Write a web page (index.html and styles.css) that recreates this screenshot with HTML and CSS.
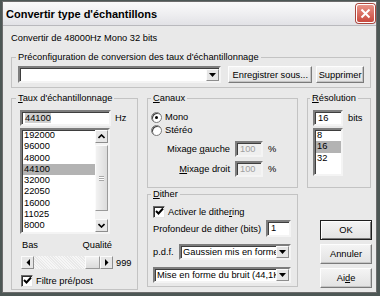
FILE: index.html
```html
<!DOCTYPE html>
<html lang="fr">
<head>
  <meta charset="UTF-8" />
  <title>Convertir type d'échantillons</title>
  <link rel="stylesheet" href="styles.css">
</head>
<body>

  <div class="window">
    <div class="titlebar">
      <span class="title">Convertir type d'échantillons</span>
      <span class="close-btn">
        <svg width="11" height="11" viewBox="0 0 11 11"><path d="M1.5 1.5 L9.5 9.5 M9.5 1.5 L1.5 9.5" stroke="#fff" stroke-width="2" /></svg>
      </span>
    </div>

    <div class="client">
      <p class="info">Convertir de 48000Hz Mono 32 bits</p>

      <fieldset class="group preset">
        <legend>Préconfiguration de conversion des taux d'échantillonnage</legend>
        <div class="preset-row">
          <div class="combo preset-combo">
            <span class="combo-text"></span>
            <span class="drop-btn"><svg width="7" height="4" viewBox="0 0 7 4"><path d="M0 0 H7 L3.5 4 Z" fill="#000" /></svg></span>
          </div>
          <span class="btn btn-save">Enregistrer sous...</span>
          <span class="btn btn-delete">Supprimer</span>
        </div>
      </fieldset>

      <div class="main">
        <fieldset class="group rate">
          <legend><u>T</u>aux d'échantillonnage</legend>
          <div class="field-row">
            <span class="edit rate-edit"><span class="sel-text">44100</span></span>
            <span class="unit">Hz</span>
          </div>
          <div class="listbox rate-list">
            <ul class="list-items">
              <li>192000</li>
              <li>96000</li>
              <li>48000</li>
              <li class="selected">44100</li>
              <li>32000</li>
              <li>22050</li>
              <li>16000</li>
              <li>11025</li>
              <li>8000</li>
            </ul>
            <div class="vscroll">
              <span class="sb-btn"><svg width="7" height="5" viewBox="0 0 7 5"><path d="M0.5 4 L3.5 1 L6.5 4" stroke="#000" stroke-width="1.6" fill="none" /></svg></span>
              <span class="sb-thumb"><span class="grip"></span></span>
              <span class="sb-track"></span>
              <span class="sb-btn"><svg width="7" height="5" viewBox="0 0 7 5"><path d="M0.5 1 L3.5 4 L6.5 1" stroke="#000" stroke-width="1.6" fill="none" /></svg></span>
            </div>
          </div>
          <div class="quality-labels">
            <span>Bas</span>
            <span>Qualité</span>
          </div>
          <div class="slider-row">
            <div class="hscroll">
              <span class="sb-btn"><svg width="4" height="7" viewBox="0 0 4 7"><path d="M4 0 V7 L0.5 3.5 Z" fill="#000" /></svg></span>
              <span class="hs-track"><span class="hs-thumb"></span></span>
              <span class="sb-btn"><svg width="4" height="7" viewBox="0 0 4 7"><path d="M0 0 V7 L3.5 3.5 Z" fill="#000" /></svg></span>
            </div>
            <span class="slider-value">999</span>
          </div>
          <label class="check-row filter-row">
            <span class="checkbox"><svg width="9" height="9" viewBox="0 0 9 9"><path d="M1 4 L3.5 6.5 L8 1.5" stroke="#000" stroke-width="2" fill="none" /></svg></span>
            <span>Filtre pré/post</span>
          </label>
        </fieldset>

        <fieldset class="group channels">
          <legend><u>C</u>anaux</legend>
          <label class="radio-row">
            <span class="radio checked"></span>
            <span>Mono</span>
          </label>
          <label class="radio-row">
            <span class="radio"></span>
            <span>Stéréo</span>
          </label>
          <div class="mix-row mix-left">
            <span class="mix-label">Mixage <u>g</u>auche</span>
            <span class="edit disabled">100</span>
            <span>%</span>
          </div>
          <div class="mix-row">
            <span class="mix-label"><u>M</u>ixage droit</span>
            <span class="edit disabled">100</span>
            <span>%</span>
          </div>
        </fieldset>

        <fieldset class="group resolution">
          <legend><u>R</u>ésolution</legend>
          <div class="field-row">
            <span class="edit res-edit">16</span>
            <span class="unit">bits</span>
          </div>
          <div class="listbox res-list">
            <ul class="list-items">
              <li>8</li>
              <li class="selected">16</li>
              <li>32</li>
            </ul>
          </div>
        </fieldset>

        <fieldset class="group dither">
          <legend><u>D</u>ither</legend>
          <label class="check-row">
            <span class="checkbox"><svg width="9" height="9" viewBox="0 0 9 9"><path d="M1 4 L3.5 6.5 L8 1.5" stroke="#000" stroke-width="2" fill="none" /></svg></span>
            <span>Activer le dithe<u>r</u>ing</span>
          </label>
          <div class="depth-row">
            <span>Profondeur de dither (bits)</span>
            <span class="edit depth-edit">1</span>
          </div>
          <div class="pdf-row">
            <span>p.d.f.</span>
            <div class="combo pdf-combo">
              <span class="combo-text">Gaussien mis en forme</span>
              <span class="drop-btn"><svg width="7" height="4" viewBox="0 0 7 4"><path d="M0 0 H7 L3.5 4 Z" fill="#000" /></svg></span>
            </div>
          </div>
          <div class="combo noise-combo">
            <span class="combo-text">Mise en forme du bruit (44,1KHz)</span>
            <span class="drop-btn"><svg width="7" height="4" viewBox="0 0 7 4"><path d="M0 0 H7 L3.5 4 Z" fill="#000" /></svg></span>
          </div>
        </fieldset>

        <div class="actions">
          <span class="btn btn-default">OK</span>
          <span class="btn">Annuler</span>
          <span class="btn">Ai<u>d</u>e</span>
        </div>
      </div>
    </div>
  </div>

</body>
</html>
```

FILE: styles.css
```css
* {
  box-sizing: border-box;
}

body {
  margin: 0;
  background-color: #4d5755;
  font-family: "Liberation Sans", Arial, sans-serif;
  font-size: 9.3px;
  color: #000;
}

.window {
  width: 375px;
  height: 292px;
  margin: 1px 0 0 2px;
  border: 1px solid #6c6c6c;
  background-color: #e9e9e9;
  display: flex;
  flex-direction: column;
}

.titlebar {
  flex: none;
  height: 24px;
  padding: 0 1px 0 3px;
  display: flex;
  align-items: center;
  justify-content: space-between;
  background: linear-gradient(#fafafa, #efeff1 50%, #e2e2e6);
  border-bottom: 1px solid #b9b9bd;
}

.title {
  font-size: 11px;
  font-weight: bold;
}

.close-btn {
  width: 19px;
  height: 19px;
  border: 1px solid #fff;
  border-radius: 3px;
  background: linear-gradient(#e89488, #c9493e);
  box-shadow: 0 0 0 1px #a9463d;
  display: flex;
  align-items: center;
  justify-content: center;
}

.client {
  padding: 0 5px 0 8px;
}

.info {
  margin: 6px 0 0;
  line-height: 12px;
}

/* group boxes */

.group {
  margin: 0;
  min-width: 0;
  border: 1px solid #c3c3c3;
  padding: 0 5px;
}

.group legend {
  padding: 0 2px;
  line-height: 12px;
}

.preset {
  margin-top: 7px;
  padding: 3px 6px 4px 6px;
}

.preset legend {
  margin-left: -2px;
}

.preset-row {
  display: flex;
  height: 17px;
}

.main {
  margin-top: 4px;
  display: grid;
  grid-template-columns: 127px 151px 64px;
  grid-template-rows: 96px 102px;
  column-gap: 9px;
}

.rate {
  grid-column: 1;
  grid-row: 1 / 3;
  padding: 6px 4px 0 8px;
}

.rate legend {
  margin-left: -4px;
}

.channels {
  grid-column: 2;
  grid-row: 1;
  padding: 7px 4px 0 3px;
}

.channels legend {
  margin-left: 0;
}

.resolution {
  grid-column: 3;
  grid-row: 1;
  padding: 6px 3px 0 5px;
}

.resolution legend {
  margin-left: -3px;
}

.dither {
  grid-column: 2;
  grid-row: 2;
  margin-bottom: 3px;
  padding: 5px 6px 0 5px;
}

.dither legend {
  margin-left: -2px;
}

/* controls */

.edit {
  display: block;
  height: 16px;
  padding: 0 3px;
  line-height: 12px;
  background-color: #fff;
  border: 2px solid;
  border-color: #7d7d7d #f4f4f4 #f4f4f4 #7d7d7d;
  box-shadow: inset 1px 1px 0 #3e3e3e;
}

.edit.disabled {
  background-color: #efefef;
  color: #a0a0a0;
  width: 28px;
}

.sel-text {
  background-color: #cfcfcf;
}

.field-row {
  display: flex;
  align-items: center;
}

.unit {
  margin-left: 4px;
}

.rate-edit {
  width: 91px;
}

.res-edit {
  width: 30px;
}

.resolution .unit {
  margin-left: 5px;
}

.listbox {
  display: flex;
  background-color: #fff;
  border: 2px solid;
  border-color: #7d7d7d #f4f4f4 #f4f4f4 #7d7d7d;
  box-shadow: inset 1px 1px 0 #3e3e3e;
}

.list-items {
  flex: 1;
  list-style: none;
  margin: 0;
  padding: 0 0 0 1px;
}

.list-items li {
  height: 11.25px;
  line-height: 11.25px;
  padding-left: 1px;
}

.list-items .selected {
  background-color: #b3b3b3;
}

.rate-list {
  margin-top: 2px;
  width: 90px;
  height: 106px;
}

.res-list {
  margin-top: 2px;
  width: 30px;
  height: 48px;
}

.vscroll {
  width: 13px;
  display: flex;
  flex-direction: column;
  background-color: #f3f3f3;
}

.sb-btn {
  flex: none;
  width: 13px;
  height: 13px;
  display: flex;
  align-items: center;
  justify-content: center;
  background-color: #e6e6e6;
  border: 1px solid;
  border-color: #fbfbfb #8d8d8d #8d8d8d #fbfbfb;
}

.sb-thumb {
  margin-top: 2px;
  height: 66px;
  display: flex;
  align-items: center;
  justify-content: center;
  background: linear-gradient(90deg, #f2f2f2, #dcdcdc);
  border: 1px solid;
  border-color: #fbfbfb #9a9a9a #9a9a9a #fbfbfb;
}

.grip {
  width: 5px;
  height: 5px;
  border-top: 1px solid #a8a8a8;
  border-bottom: 1px solid #a8a8a8;
  background: linear-gradient(#fff 40%, #a8a8a8 40%, #a8a8a8 60%, #fff 60%);
}

.sb-track {
  flex: 1;
}

.quality-labels {
  margin-top: 5px;
  width: 92px;
  padding: 0 0 0 2px;
  line-height: 12px;
  display: flex;
  justify-content: space-between;
}

.slider-row {
  margin-top: 5px;
  display: flex;
  align-items: center;
}

.hscroll {
  width: 92px;
  height: 13px;
  margin-left: 1px;
  display: flex;
  background-color: #f3f3f3;
}

.hs-track {
  flex: 1;
  display: flex;
  justify-content: flex-end;
  background-image: repeating-linear-gradient(45deg, #f6f6f6 0 1px, #e9e9e9 1px 2px);
}

.hs-thumb {
  width: 15px;
  background: linear-gradient(#f2f2f2, #dcdcdc);
  border: 1px solid;
  border-color: #fbfbfb #9a9a9a #9a9a9a #fbfbfb;
}

.slider-value {
  margin-left: 3px;
}

.check-row {
  display: flex;
  align-items: center;
  gap: 3px;
  height: 13px;
}

.filter-row {
  margin: 5px 0 0 1px;
}

.checkbox {
  width: 12px;
  height: 12px;
  display: flex;
  align-items: center;
  justify-content: center;
  background-color: #fff;
  border: 1px solid;
  border-color: #6a6a6a #e4e4e4 #e4e4e4 #6a6a6a;
  box-shadow: inset 1px 1px 0 #2f2f2f;
}

.radio-row {
  display: flex;
  align-items: center;
  gap: 3px;
  height: 12px;
  margin-bottom: 1px;
}

.radio {
  width: 11px;
  height: 11px;
  border-radius: 50%;
  background-color: #fff;
  border: 1px solid #7a7a7a;
  box-shadow: inset 1px 1px 0 #444;
  display: flex;
  align-items: center;
  justify-content: center;
}

.radio.checked::after {
  content: "";
  width: 3px;
  height: 3px;
  border-radius: 50%;
  background-color: #000;
}

.mix-row {
  display: grid;
  grid-template-columns: 79px 28px auto;
  column-gap: 5px;
  align-items: center;
  margin-top: 4px;
}

.mix-left {
  margin-top: 5px;
}

.mix-label {
  text-align: right;
}

.depth-row {
  margin-top: 2px;
  display: flex;
  align-items: center;
  justify-content: space-between;
}

.depth-edit {
  width: 25px;
  height: 17px;
  line-height: 13px;
}

.combo {
  display: flex;
  align-items: center;
  height: 16px;
  background-color: #fff;
  border: 2px solid;
  border-color: #7d7d7d #f4f4f4 #f4f4f4 #7d7d7d;
  box-shadow: inset 1px 1px 0 #3e3e3e;
}

.combo-text {
  flex: 1;
  padding-left: 2px;
  white-space: nowrap;
  overflow: hidden;
}

.drop-btn {
  flex: none;
  width: 13px;
  height: 12px;
  display: flex;
  align-items: center;
  justify-content: center;
  background-color: #e6e6e6;
  border: 1px solid;
  border-color: #fbfbfb #8d8d8d #8d8d8d #fbfbfb;
}

.preset-combo {
  width: 204px;
  height: 17px;
}

.pdf-row {
  margin-top: 7px;
  display: flex;
  align-items: center;
  justify-content: space-between;
}

.pdf-combo {
  width: 112px;
}

.noise-combo {
  margin-top: 7px;
}

/* buttons */

.btn {
  display: flex;
  align-items: center;
  justify-content: center;
  height: 17px;
  background: linear-gradient(#f4f4f4, #e2e2e2);
  border: 1px solid;
  border-color: #fdfdfd #7a7a7a #7a7a7a #fdfdfd;
  box-shadow: inset -1px -1px 0 #c4c4c4;
  white-space: nowrap;
}

.btn-save {
  width: 84px;
  margin-left: 7px;
}

.btn-delete {
  width: 48px;
  margin-left: 4px;
}

.actions {
  grid-column: 3;
  grid-row: 2;
  padding-bottom: 2px;
  display: flex;
  flex-direction: column;
  justify-content: flex-end;
  align-items: flex-end;
  gap: 4px;
}

.actions .btn {
  width: 52px;
  height: 20px;
  margin-right: -1px;
}

.actions .btn-default {
  border: 1px solid #1e1e1e;
  box-shadow: inset 1px 1px 0 #fdfdfd, inset -1px -1px 0 #7a7a7a;
}
```
